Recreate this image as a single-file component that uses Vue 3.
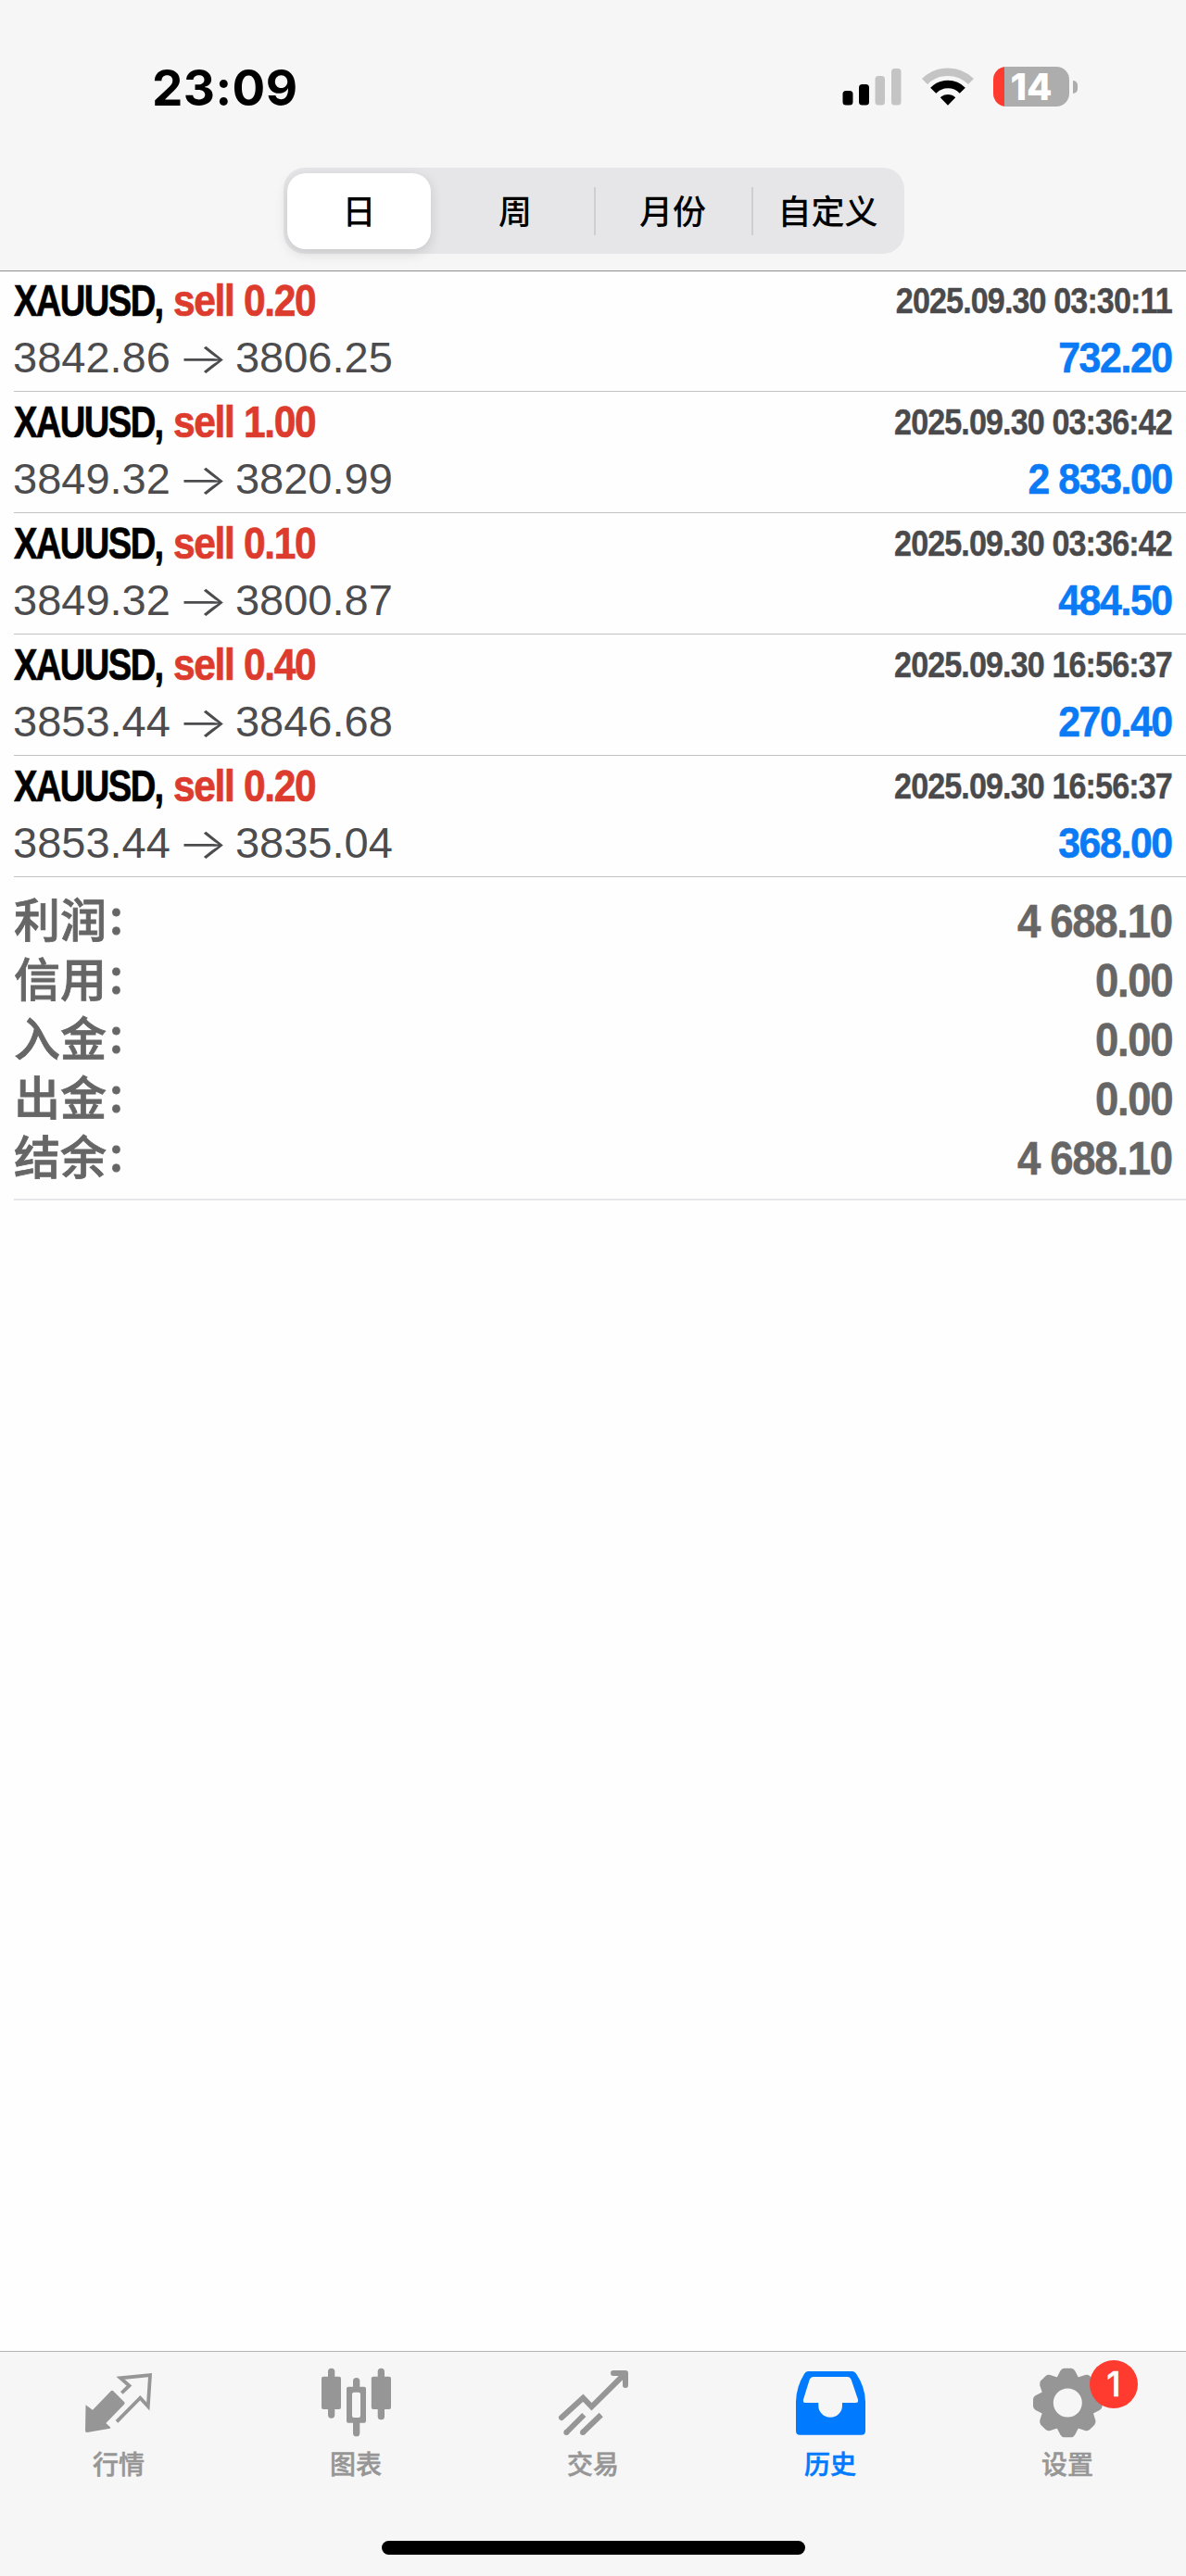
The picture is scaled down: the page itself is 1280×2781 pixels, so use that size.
<template>
  <div class="screen">
    <header class="header">
      <div class="status-bar">
        <span class="clock">23:09</span>
        <div class="status-icons">
          <svg class="signal" width="64" height="44" viewBox="0 0 64 44">
            <rect x="0.5" y="26" width="11" height="15.5" rx="3.5" fill="#000" />
            <rect x="18" y="19" width="11" height="22.5" rx="3.5" fill="#000" />
            <rect x="35.5" y="10" width="10.5" height="31.5" rx="3.5" fill="#c4c4c4" />
            <rect x="53" y="2" width="10.5" height="39.5" rx="3.5" fill="#c4c4c4" />
          </svg>
          <svg class="wifi" width="58" height="44" viewBox="0 0 58 44">
            <path d="M4 16 A35.5 35.5 0 0 1 54 16" fill="none" stroke="#c4c4c4" stroke-width="8.5" />
            <path d="M13.2 25.7 A22 22 0 0 1 44.8 25.7" fill="none" stroke="#000" stroke-width="8.5" />
            <path d="M29 41.7 L20.8 33.2 A11.8 11.8 0 0 1 37.2 33.2 Z" fill="#000" />
          </svg>
          <div class="battery">
            <div class="battery-body"><span>14</span></div>
            <div class="battery-cap"></div>
          </div>
        </div>
      </div>
      <nav class="segments">
        <button
          v-for="(period, i) in periods"
          :key="period"
          class="segment"
          :class="{ selected: i === selected, divided: i > selected + 1 }"
          @click="selected = i"
        >
          <span>{{ period }}</span>
        </button>
      </nav>
    </header>

    <main class="history">
      <div v-for="(deal, i) in deals" :key="i" class="deal">
        <div class="deal-row">
          <div class="title">
            <span class="symbol">XAUUSD,</span>
            <span class="volume">sell {{ deal.volume }}</span>
          </div>
          <span class="time">{{ deal.time }}</span>
        </div>
        <div class="deal-row second">
          <div class="prices">
            <span>{{ deal.open }}</span>
            <span class="arrow">→</span>
            <span>{{ deal.close }}</span>
          </div>
          <span class="profit">{{ deal.profit }}</span>
        </div>
      </div>

      <div class="summary">
        <div v-for="row in summary" :key="row.label" class="summary-row">
          <span class="label">{{ row.label }}<span class="colon">:</span></span>
          <span class="value">{{ row.value }}</span>
        </div>
      </div>
    </main>

    <footer class="footer">
      <nav class="tabs">
        <a class="tab">
          <svg class="icon" viewBox="0 0 80 80">
            <path d="M4.5 44.3 L12 49.7 L31.5 29.6 Q33 28 34.5 29.5 L46 41 Q47.3 42.4 46 43.7 L26.3 64 L31 68.3 Q31.7 69.5 30.5 69.7 L6 73.9 Q4 74 4 72 Z" fill="currentColor" />
            <path d="M43.3 31.3 L51.5 23.5 L42 15.3 L74 12.2 L71.8 46 L63.3 36.7 L38 62.3" fill="none" stroke="currentColor" stroke-width="3.8" />
          </svg>
          <span>行情</span>
        </a>
        <a class="tab">
          <svg class="icon" viewBox="0 0 80 80" fill="currentColor">
            <rect x="10" y="4.7" width="7.3" height="54" rx="3.6" />
            <rect x="3" y="13.7" width="21" height="35.3" rx="2" />
            <rect x="63.7" y="4.7" width="7.3" height="55.6" rx="3.6" />
            <rect x="56.8" y="13.7" width="21.2" height="35.3" rx="2" />
            <path d="M37 24.7 V18.6 a3.65 3.65 0 0 1 7.3 0 V24.7 H49 a2 2 0 0 1 2 2 V61.7 a2 2 0 0 1 -2 2 H44.3 V74.7 a3.65 3.65 0 0 1 -7.3 0 V63.7 H32 a2 2 0 0 1 -2 -2 V26.7 a2 2 0 0 1 2 -2 Z M38 30.7 a2 2 0 0 0 -2 2 V56 a2 2 0 0 0 2 2 H43 a2 2 0 0 0 2 -2 V32.7 a2 2 0 0 0 -2 -2 Z" fill-rule="evenodd" />
          </svg>
          <span>图表</span>
        </a>
        <a class="tab">
          <svg class="icon" viewBox="0 0 80 80" fill="none" stroke="currentColor" stroke-width="6">
            <path d="M6 58 L29.3 36.7 L38.5 46.3 L74 11" stroke-linecap="round" />
            <path d="M62 10 H75 V23" stroke-linecap="round" stroke-linejoin="round" />
            <path d="M66 10 H75 V19 Z" fill="currentColor" stroke="none" />
            <path d="M11.3 74 L30.3 55 M29 74 L48.7 55" />
            <path d="M11.3 74 h0.01 M29 74 h0.01" stroke-linecap="round" />
          </svg>
          <span>交易</span>
        </a>
        <a class="tab active">
          <svg class="icon" viewBox="0 0 80 80">
            <path d="M16 8 H64 Q66.5 8 68 10.5 Q77.8 25 78 41 V72.2 Q78 76.7 73.5 76.7 H7.5 Q3 76.7 3 72.2 V41 Q3.2 25 12.2 10.5 Q13.5 8 16 8 Z M21.5 14 Q19 14 17.7 17 L11 38.5 Q10.2 42 13.2 42 H27.3 V45 A12.8 12.8 0 0 0 53 45 V42 H67.5 Q70.7 42 70 38.5 L62.7 17 Q61.5 14 59 14 Z" fill="currentColor" fill-rule="evenodd" />
          </svg>
          <span>历史</span>
        </a>
        <a class="tab">
          <svg class="icon" viewBox="0 0 80 80">
            <g fill="currentColor">
              <path
                v-for="n in 8"
                :key="n"
                :transform="`rotate(${n * 45} 40.3 42)`"
                d="M28 16 L32.4 7.5 Q34 4.8 36.5 4.7 H44.1 Q46.6 4.8 48.2 7.5 L52.6 16 Z"
              />
            </g>
            <circle cx="40.3" cy="42" r="22.5" fill="none" stroke="currentColor" stroke-width="14" />
          </svg>
          <span>设置</span>
          <i class="badge">1</i>
        </a>
      </nav>
      <div class="home-indicator"></div>
    </footer>
  </div>
</template>

<script setup>
import { ref } from 'vue';

const periods = ['日', '周', '月份', '自定义'];
const selected = ref(0);

const deals = [
  { volume: '0.20', time: '2025.09.30 03:30:11', open: '3842.86', close: '3806.25', profit: '732.20' },
  { volume: '1.00', time: '2025.09.30 03:36:42', open: '3849.32', close: '3820.99', profit: '2 833.00' },
  { volume: '0.10', time: '2025.09.30 03:36:42', open: '3849.32', close: '3800.87', profit: '484.50' },
  { volume: '0.40', time: '2025.09.30 16:56:37', open: '3853.44', close: '3846.68', profit: '270.40' },
  { volume: '0.20', time: '2025.09.30 16:56:37', open: '3853.44', close: '3835.04', profit: '368.00' },
];

const summary = [
  { label: '利润', value: '4 688.10' },
  { label: '信用', value: '0.00' },
  { label: '入金', value: '0.00' },
  { label: '出金', value: '0.00' },
  { label: '结余', value: '4 688.10' },
];
</script>

<style>
body {
  margin: 0;
  background: #fefefe;
}
</style>

<style scoped>
.screen {
  display: flex;
  flex-direction: column;
  width: 1280px;
  height: 2781px;
  background: #fefefe;
  font-family: "Liberation Sans", "Noto Sans CJK SC", sans-serif;
  overflow: hidden;
}

.header {
  box-sizing: border-box;
  height: 293px;
  background: #f6f6f6;
  border-bottom: 1px solid #8e8e90;
}

.status-bar {
  display: flex;
  justify-content: space-between;
  align-items: center;
  box-sizing: border-box;
  height: 181px;
  padding: 6px 117px 0 164px;
}

.clock {
  padding-top: 3px;
  font: 700 53px/60px Inter, sans-serif;
  letter-spacing: 0.4px;
}

.status-icons {
  display: flex;
  align-items: center;
}

.wifi {
  margin-left: 21px;
}

.battery {
  display: flex;
  align-items: center;
  margin-left: 20px;
}

.battery-body {
  display: flex;
  align-items: center;
  justify-content: center;
  width: 82px;
  height: 43px;
  border-radius: 14px;
  background: linear-gradient(to right, #ff3b2f 12px, #adadad 12px);
  color: #fff;
  font: 800 40px/43px Inter, sans-serif;
}

.battery-cap {
  width: 5px;
  height: 14px;
  margin-left: 4px;
  border-radius: 0 5px 5px 0;
  background: #adadad;
}

.segments {
  display: flex;
  width: 670px;
  height: 93px;
  margin-left: 306px;
  border-radius: 23px;
  background: #e6e6e8;
}

.segment {
  display: flex;
  align-items: center;
  width: 170px;
  padding: 0;
  border: none;
  background: none;
  color: #000;
  font: 500 36px/50px "Noto Sans CJK SC", sans-serif;
}

.segment span {
  flex: 1;
  padding-bottom: 4px;
  text-align: center;
}

.segment:first-child,
.segment:last-child {
  width: 165px;
}

.segment.divided::before {
  content: "";
  width: 2px;
  height: 52px;
  margin-right: -2px;
  background: #cfcfd2;
}

.segment.selected span {
  margin: 0 6px 0 4px;
  line-height: 78px;
  border-radius: 20px;
  background: #fff;
  box-shadow: 0 4px 14px rgba(0, 0, 0, 0.14);
}

.deal {
  box-sizing: border-box;
  height: 131px;
  margin-left: 15px;
  padding: 5px 15px 0 0;
  border-bottom: 1px solid #c2c2c4;
}

.deal:first-child {
  height: 130px;
  padding-top: 4px;
}

.deal-row {
  display: flex;
  justify-content: space-between;
  align-items: center;
  height: 56px;
}

.deal-row.second {
  height: 64px;
}

.title {
  display: flex;
  font-size: 48px;
  font-weight: 700;
  line-height: 58px;
  -webkit-text-stroke: 0.7px;
}

/* Narrow faces are squeezed from the regular width ones */
.symbol {
  width: 172px;
  letter-spacing: -2px;
  white-space: nowrap;
  transform: scaleX(0.795);
  transform-origin: left;
  color: #000;
}

.volume {
  letter-spacing: -1.5px;
  white-space: nowrap;
  transform: scaleX(0.885);
  transform-origin: left;
  color: #dc3b2d;
}

.time {
  letter-spacing: -1px;
  transform: scaleX(0.898);
  transform-origin: right;
  color: #4a4a4c;
  font-size: 38px;
  font-weight: 700;
  -webkit-text-stroke: 0.4px;
}

.prices {
  display: flex;
  align-items: center;
  margin-left: -1px;
  padding-top: 2px;
  color: #4c4c4e;
  font-size: 47px;
  line-height: 56px;
}

.arrow {
  width: 70px;
  text-align: center;
  font: 300 46px/56px Inter, sans-serif;
  transform: scaleX(1.26);
}

.profit {
  letter-spacing: -1.5px;
  transform: scaleX(0.91);
  transform-origin: right;
  color: #0a7af5;
  font-size: 47px;
  font-weight: 700;
  -webkit-text-stroke: 0.6px;
}

.summary {
  margin-left: 15px;
  padding: 16px 15px 11px 0;
  border-bottom: 2px solid #e6e6e8;
  color: #666;
}

.summary-row {
  display: flex;
  justify-content: space-between;
  align-items: center;
  height: 64px;
}

.label {
  display: flex;
  padding-bottom: 9px;
  font: 500 50px/55px "Noto Sans CJK SC", sans-serif;
  -webkit-text-stroke: 0.8px;
}

.colon {
  margin: -4px 0 4px 3px;
}

.value {
  letter-spacing: -1.5px;
  transform: scaleX(0.912);
  transform-origin: right;
  font-size: 50px;
  font-weight: 700;
  -webkit-text-stroke: 0.5px;
}

.footer {
  display: flex;
  flex-direction: column;
  align-items: center;
  box-sizing: border-box;
  height: 243px;
  margin-top: auto;
  border-top: 1px solid #b4b4b6;
  background: #f6f6f6;
}

.tabs {
  display: flex;
  width: 100%;
  height: 204px;
}

.tab {
  position: relative;
  display: flex;
  flex: 1;
  flex-direction: column;
  align-items: center;
  padding-top: 13px;
  color: #969696;
  font: 500 28px/40px "Noto Sans CJK SC", sans-serif;
  -webkit-text-stroke: 0.5px;
}

.tab.active {
  color: #007aff;
}

.icon {
  width: 80px;
  height: 80px;
  margin-bottom: 7px;
}

.badge {
  position: absolute;
  top: 9px;
  left: 152px;
  width: 52px;
  height: 52px;
  border-radius: 50%;
  background: #ff3b30;
  color: #fff;
  font: 500 37px/52px Inter, sans-serif;
  text-align: center;
}

.home-indicator {
  width: 457px;
  height: 15px;
  border-radius: 8px;
  background: #000;
}
</style>
